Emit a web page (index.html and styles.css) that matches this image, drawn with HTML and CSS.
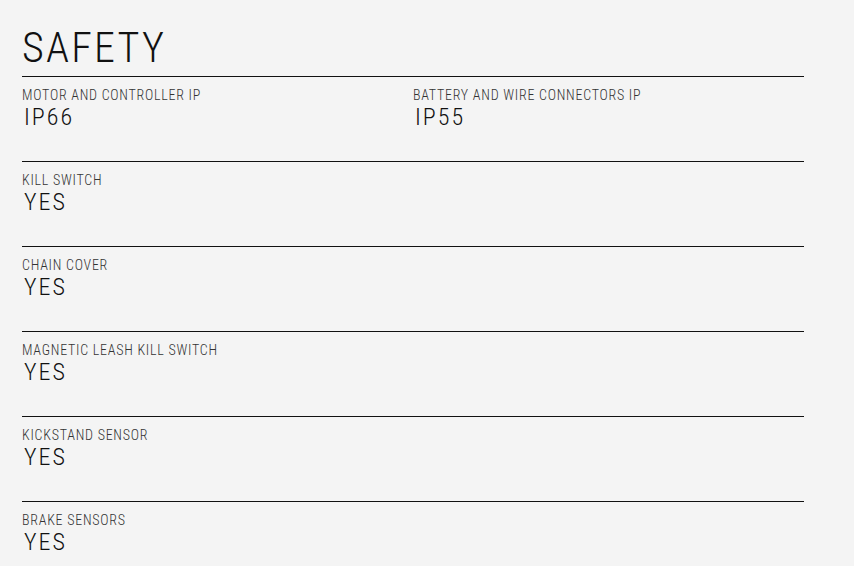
FILE: index.html
```html
<!DOCTYPE html>
<html lang="en">
<head>
<meta charset="utf-8">
<title>Safety</title>
<link rel="stylesheet" href="styles.css">
</head>
<body>
<section class="specs">
  <h2 class="specs-title">SAFETY</h2>
  <div class="spec-row spec-row--two">
    <div class="spec">
      <div class="spec-label">MOTOR AND CONTROLLER IP</div>
      <div class="spec-value">IP66</div>
    </div>
    <div class="spec">
      <div class="spec-label">BATTERY AND WIRE CONNECTORS IP</div>
      <div class="spec-value">IP55</div>
    </div>
  </div>
  <div class="spec-row">
    <div class="spec">
      <div class="spec-label">KILL SWITCH</div>
      <div class="spec-value">YES</div>
    </div>
  </div>
  <div class="spec-row">
    <div class="spec">
      <div class="spec-label">CHAIN COVER</div>
      <div class="spec-value">YES</div>
    </div>
  </div>
  <div class="spec-row">
    <div class="spec">
      <div class="spec-label">MAGNETIC LEASH KILL SWITCH</div>
      <div class="spec-value">YES</div>
    </div>
  </div>
  <div class="spec-row">
    <div class="spec">
      <div class="spec-label">KICKSTAND SENSOR</div>
      <div class="spec-value">YES</div>
    </div>
  </div>
  <div class="spec-row">
    <div class="spec">
      <div class="spec-label">BRAKE SENSORS</div>
      <div class="spec-value">YES</div>
    </div>
  </div>
</section>
</body>
</html>
```
FILE: styles.css
```css
html, body {
  margin: 0;
  padding: 0;
  background: #f4f4f4;
}

body {
  color: #111;
  font-family: "Roboto Condensed", "Roboto", sans-serif;
}

.specs {
  width: 782px;
  margin-left: 22px;
}

.specs-title {
  margin: 24px 0 4px 0;
  font-family: "Roboto Condensed", "Roboto", sans-serif;
  font-weight: 300;
  font-size: 42px;
  line-height: 48px;
  letter-spacing: 2.2px;
  color: #111;
}

.spec-row {
  display: grid;
  grid-template-columns: 1fr;
  height: 85px;
  box-sizing: border-box;
  border-top: 1px solid #111;
  padding-top: 10px;
}

.spec-row--two {
  grid-template-columns: 1fr 1fr;
}

.spec-label {
  font-size: 14px;
  line-height: 16px;
  font-weight: 300;
  letter-spacing: 0.75px;
  color: #333;
}

.spec-value {
  font-family: "Roboto Condensed", "Roboto", sans-serif;
  font-weight: 300;
  font-size: 24px;
  line-height: 28px;
  letter-spacing: 2px;
  color: #111;
  padding-left: 2px;
}
```
